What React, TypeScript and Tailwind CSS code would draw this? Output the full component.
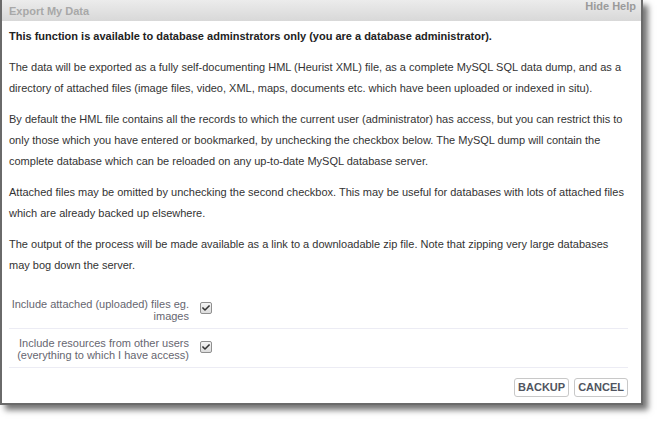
import { FaCheck } from "react-icons/fa";

const Check = () => (
  <span className="mt-[4px] flex h-[12px] w-[12px] items-center justify-center rounded-[2px] border border-[#8f8f8f] bg-gradient-to-b from-[#f4f4f4] to-[#dcdcdc]">
    <FaCheck size={8} className="text-[#333]" />
  </span>
);

const OptionRow = ({ lines }: { lines: string[] }) => (
  <div className="flex items-start gap-[11px] border-b border-[#ececf4] pt-[8px] pb-[6px]">
    <div className="w-[180px] text-right text-[11px] leading-[12px] text-[#666670]">
      {lines.map((l) => (
        <div key={l}>{l}</div>
      ))}
    </div>
    <Check />
  </div>
);

export default function App() {
  return (
    <div className="h-[421px] w-[658px] bg-white font-['Liberation_Sans',Arial,sans-serif]">
      <div className="flex h-[405px] w-[643px] flex-col border-x-2 border-b-2 border-[#6a6a6a] bg-white shadow-[5px_5px_6px_rgba(0,0,0,0.55)]">
        {/* title bar */}
        <div className="flex h-[21px] items-start justify-between bg-gradient-to-b from-[#ececec] to-[#d8d8d8] pl-[7px] pr-[5px]">
          <span className="pt-[3px] text-[11px] font-bold text-[#a8a8a8]">Export My Data</span>
          <span className="-mt-[2px] text-[11px] font-bold text-[#9a9a9a]">Hide Help</span>
        </div>

        <div className="flex flex-1 flex-col pl-[7px] pt-[5px] text-[11px] leading-[21px] text-[#333]">
          <div className="pr-[17px]">
            <p className="font-bold text-[#222]">
              This function is available to database adminstrators only (you are a database administrator).
            </p>
            <p className="mt-[10px]">
              The data will be exported as a fully self-documenting HML (Heurist XML) file, as a complete MySQL SQL data
              dump, and as a directory of attached files (image files, video, XML, maps, documents etc. which have been
              uploaded or indexed in situ).
            </p>
            <p className="mt-[10px]">
              By default the HML file contains all the records to which the current user (administrator) has access,
              but you can restrict this to only those which you have entered or bookmarked, by unchecking the checkbox
              below. The MySQL dump will contain the complete database which can be reloaded on any up-to-date MySQL
              database server.
            </p>
            <p className="mt-[10px]">
              Attached files may be omitted by unchecking the second checkbox. This may be useful for databases with
              lots of attached files which are already backed up elsewhere.
            </p>
            <p className="mt-[10px]">
              The output of the process will be made available as a link to a downloadable zip file. Note that zipping
              very large databases may bog down the server.
            </p>
          </div>

          <div className="mt-[14px] mr-[13px]">
            <OptionRow lines={["Include attached (uploaded) files eg.", "images"]} />
            <OptionRow lines={["Include resources from other users", "(everything to which I have access)"]} />
          </div>

          <div className="mt-[10px] mr-[13px] flex justify-end gap-[5px]">
            <button className="h-[19px] rounded-[3px] border border-[#c8c8c8] bg-white px-[3px] text-[11px] font-bold leading-none text-[#505560]">
              BACKUP
            </button>
            <button className="h-[19px] rounded-[3px] border border-[#c8c8c8] bg-white px-[3px] text-[11px] font-bold leading-none text-[#505560]">
              CANCEL
            </button>
          </div>
        </div>
      </div>
    </div>
  );
}
